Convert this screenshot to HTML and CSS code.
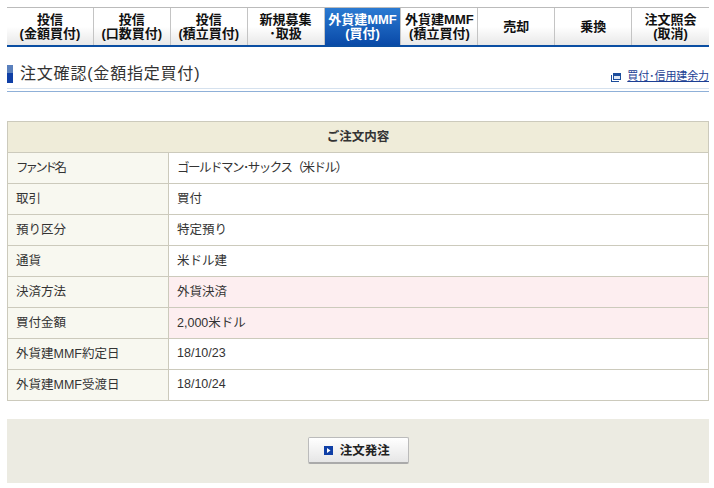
FILE: index.html
```html
<!DOCTYPE html>
<html lang="ja">
  <head>
    <meta charset="UTF-8" />
    <title>注文確認</title>
    <link rel="stylesheet" href="styles.css">
  </head>
  <body>
    <ul class="tabs">
      <li class="tab tab-first">投信<br>(金額買付)</li>
      <li class="tab">投信<br>(口数買付)</li>
      <li class="tab">投信<br>(積立買付)</li>
      <li class="tab">新規募集<br>･取扱</li>
      <li class="tab tab-active">外貨建MMF<br>(買付)</li>
      <li class="tab">外貨建MMF<br>(積立買付)</li>
      <li class="tab">売却</li>
      <li class="tab">乗換</li>
      <li class="tab">注文照会<br>(取消)</li>
    </ul>

    <div class="title-row">
      <h1 class="title"><span class="title-mark"></span>注文確認(金額指定買付)</h1>
      <a class="sub-link" href="#">
        <svg class="window-icon" width="10" height="10" viewBox="0 0 10 10">
          <path d="M0 3H1V9H8V10H0Z" fill="#1c4d9c"/>
          <rect x="2" y="1" width="8" height="7" fill="#1c4d9c"/>
          <rect x="3" y="4" width="6" height="3" fill="#dfe8f5"/>
        </svg>
        <span class="sub-link-text">買付･信用建余力</span>
      </a>
    </div>
    <div class="title-rule"></div>

    <table class="order">
      <colgroup>
        <col class="order-label">
        <col>
      </colgroup>
      <tr><th class="order-head" colspan="2">ご注文内容</th></tr>
      <tr><th><span class="kana-tight">ファンド名</span></th><td><span class="kana">ゴールドマン･サックス（米ドル）</span></td></tr>
      <tr><th>取引</th><td>買付</td></tr>
      <tr><th>預り区分</th><td>特定預り</td></tr>
      <tr><th>通貨</th><td>米ドル建</td></tr>
      <tr><th>決済方法</th><td class="pink">外貨決済</td></tr>
      <tr><th>買付金額</th><td class="pink">2,000米ドル</td></tr>
      <tr><th>外貨建MMF約定日</th><td>18/10/23</td></tr>
      <tr><th>外貨建MMF受渡日</th><td>18/10/24</td></tr>
    </table>

    <div class="actions">
      <button class="submit" type="button">
        <svg width="9" height="9" viewBox="0 0 9 9">
          <rect width="9" height="9" fill="#0f3fa6"/>
          <path d="M3 2L6.5 4.5L3 7Z" fill="#fff"/>
        </svg>
        注文発注
      </button>
    </div>
  </body>
</html>
```

FILE: styles.css
```css
html, body {
  margin: 0;
  height: 488px;
  overflow: hidden;
}
body {
  padding: 7px 5px 0 7px;
  box-sizing: border-box;
  background-color: #fff;
  color: #333;
  font-family: "Liberation Sans", "Noto Sans CJK JP", sans-serif;
  font-size: 12.5px;
}
.tabs {
  display: flex;
  margin: 0;
  padding: 0;
  list-style: none;
  height: 40px;
  box-sizing: border-box;
  border-top: 1px solid #bbb;
  border-bottom: 2px solid #0a4ea2;
}
.tab {
  width: 77px;
  box-sizing: border-box;
  border-right: 1px solid #c4c4c4;
  display: flex;
  align-items: center;
  justify-content: center;
  text-align: center;
  color: #111;
  font-weight: bold;
  font-size: 13px;
  line-height: 14px;
  background: linear-gradient(#fff 50%, #e8e8e8);
}
.tab-first {
  width: 87px;
}
.tab:last-child {
  border-right: 0;
}
.tab-active {
  color: #fff;
  background: linear-gradient(#2a7ad2, #0a4aa8);
}
.title-row {
  display: flex;
  justify-content: space-between;
  align-items: flex-end;
  height: 41px;
  border-bottom: 1px solid #d5e1ee;
}
.title-rule {
  height: 1px;
  margin-top: 2px;
  background-color: #8fb0d8;
}
.title {
  margin: 0 0 4px;
  display: flex;
  align-items: center;
  font-size: 16px;
  font-weight: normal;
  letter-spacing: 0.8px;
  color: #333;
  line-height: 20px;
}
.title-mark {
  width: 6px;
  height: 18px;
  margin-right: 7px;
  background: linear-gradient(#5a80bd 45%, #0f3fa6 45%);
}
.sub-link {
  display: flex;
  align-items: center;
  gap: 6px;
  margin-bottom: 5px;
  color: #1c3f94;
  font-size: 11px;
  letter-spacing: -0.1px;
  line-height: 13px;
  text-decoration: none;
}
.sub-link-text {
  text-decoration: underline;
}
.order {
  width: 702px;
  margin-top: 29px;
  border-collapse: collapse;
  table-layout: fixed;
}
.order-label {
  width: 161px;
}
.order th, .order td {
  height: 31px;
  padding: 0 8px 3px;
  box-sizing: border-box;
  border: 1px solid #cccabc;
  font-weight: normal;
  text-align: left;
  color: #333;
}
.order th {
  background-color: #f8f8f0;
}
.order .order-head {
  background-color: #efecd9;
  text-align: center;
  font-weight: bold;
}
.order .pink {
  background-color: #fdeef0;
}
.kana {
  letter-spacing: -1.5px;
}
.kana-tight {
  letter-spacing: -2.9px;
}
.actions {
  display: flex;
  justify-content: center;
  margin-top: 18px;
  height: 64px;
  padding-top: 18px;
  box-sizing: border-box;
  background-color: #ecebe2;
}
.submit {
  width: 101px;
  height: 27px;
  padding: 0 2px 1px 0;
  font-family: inherit;
  font-size: 12.5px;
  font-weight: bold;
  color: #222;
  border: 1px solid #bbb;
  border-bottom: 2px solid #aaa;
  border-radius: 2px;
  background: linear-gradient(#fff, #e6e6e6);
}
.submit svg {
  margin-right: 3px;
}
```
